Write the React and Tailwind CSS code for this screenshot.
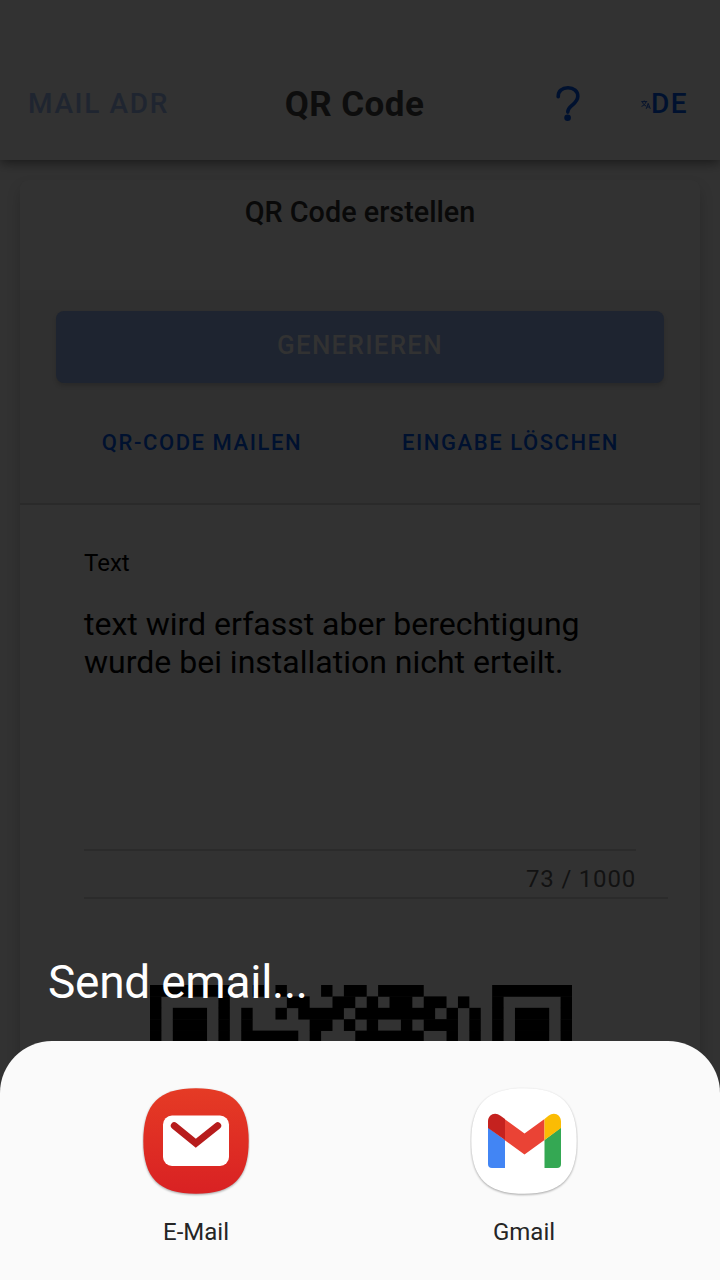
import React from "react";

const QR_ROWS = [
  "#######..#.#...#.##.####......#######",
  "#.....#.....##..##.#.##.##.#..#.....#",
  "#.###.#.#..#.####.#######.#.#.#.###.#",
  "#.###.#.#.....##.#.#..#.###.#.#.###.#",
  "#.###.#.#####.#...######..#.#.#.###.#",
];

function QrCode() {
  const cells = [];
  QR_ROWS.forEach((row, y) => {
    for (const m of row.matchAll(/#+/g)) {
      cells.push(<rect key={y + "-" + m.index} x={m.index} y={y} width={m[0].length} height="1.03" />);
    }
  });
  return (
    <svg className="h-[57px] w-[422px] shrink-0" viewBox="0 0 37 5" preserveAspectRatio="none" fill="#000">
      {cells}
    </svg>
  );
}

function QuestionIcon() {
  return (
    <svg className="h-[38px] w-[26px]" viewBox="0 0 26 38" fill="none">
      <path
        d="M3.2 11.8C3 5.8 7.2 2.8 13 2.8s9.8 3.4 9.8 8.4c0 4.2-2.6 6.4-5.6 9-3 2.5-4.4 4-4.4 6.9"
        stroke="#00112f"
        strokeWidth="3.6"
        strokeLinecap="round"
      />
      <circle cx="12.6" cy="32.8" r="3.3" fill="#00112f" />
    </svg>
  );
}

function TranslateIcon() {
  return (
    <svg className="h-[9px] w-[10px]" viewBox="0 0 10 9" fill="none" stroke="#07142e" strokeWidth="1">
      <path d="M0.3 1.6H6.2M3.2 0.5V1.6M1.4 1.8C2 4 3.5 5.4 5 6M5 1.8C4.4 4 2.8 5.5 0.5 6.4M5.2 8.9L7.2 3.4L9.3 8.9M6 7H8.6" />
    </svg>
  );
}

const SQUIRCLE = "M54 1.2C91 1.2 106.7 17 106.7 54S91 106.8 54 106.8S1.3 91 1.3 54S17 1.2 54 1.2Z";

function MailIcon() {
  return (
    <svg className="h-[112px] w-[108px]" viewBox="0 0 108 112">
      <defs>
        <linearGradient id="mailRed" x1="0" y1="0" x2="0" y2="1">
          <stop offset="0" stopColor="#e53b25" />
          <stop offset="1" stopColor="#d92123" />
        </linearGradient>
      </defs>
      <path d={SQUIRCLE} fill="url(#mailRed)" className="drop-shadow-[0_1px_1px_rgba(0,0,0,0.35)]" />
      <rect x="21" y="28.5" width="66" height="50.5" rx="9" fill="#fff" />
      <path d="M32.3 38.7L53.8 56.2L75.7 38.7" fill="none" stroke="#b71c1c" strokeWidth="7" strokeLinecap="round" />
    </svg>
  );
}

function GmailIcon() {
  return (
    <svg className="h-[112px] w-[108px]" viewBox="0 0 108 112">
      <path d={SQUIRCLE} fill="#fff" className="drop-shadow-[0_1px_1px_rgba(0,0,0,0.35)]" />
      <path d="M18 40.5L35 53V81H22Q18 81 18 77Z" fill="#4285f4" />
      <path d="M91 40.5L74.5 53V81H87Q91 81 91 77Z" fill="#34a853" />
      <path d="M34.5 32L54.5 46.5L74.5 32V53L54.5 67.5L34.5 53Z" fill="#ea4335" />
      <path d="M18 41V34.5C18 27 25.5 24.5 30.5 28.8L35 32V53Z" fill="#c5221f" />
      <path d="M91 41V34.5C91 27 83.5 24.5 78.5 28.8L74.5 32V53Z" fill="#fbbc04" />
    </svg>
  );
}

function Header() {
  return (
    <header className="relative z-10 h-40 shrink-0 bg-[#323232] pt-12 shadow-[0_2px_12px_rgba(0,0,0,0.55)]">
      <div className="grid h-28 grid-cols-[240px_1fr_240px] items-center">
        <span className="whitespace-nowrap pl-7 text-[28px] font-medium tracking-[1.65px] text-[#1f2530]">MAIL ADR</span>
        <h1 className="pr-[11px] pt-0.5 text-center text-[35px] font-bold tracking-[0.45px] text-[#0d0d0d]">QR Code</h1>
        <div className="flex items-center pl-[75px]">
          <QuestionIcon />
          <span className="ml-[60px] flex items-center text-[28px] font-medium tracking-[1.4px] text-[#00112f]">
            <TranslateIcon />
            <span>DE</span>
          </span>
        </div>
      </div>
    </header>
  );
}

function Card() {
  return (
    <section className="mx-5 mt-5 flex h-[900px] shrink-0 flex-col rounded-t-lg bg-[#323232] shadow-[0_8px_14px_rgba(0,0,0,0.18)]">
      <div className="h-[110px] shrink-0 pt-3 text-center text-[28.8px] font-medium leading-10 text-[#090909]">
        QR Code erstellen
      </div>
      <div className="h-[215px] shrink-0 border-b-2 border-[#2a2a2a] bg-[#303030] px-9 pt-[21px]">
        <div className="flex h-[72px] items-center justify-center rounded-lg bg-[#1e2430] pb-1 text-[26px] font-medium tracking-[1.25px] text-[#323232] shadow-[0_3px_4px_rgba(0,0,0,0.15)]">
          GENERIEREN
        </div>
        <div className="mt-10 grid grid-cols-2 text-center text-[22px] font-medium leading-10 tracking-[1.57px] text-[#00112f]">
          <span className="-ml-3">QR-CODE MAILEN</span>
          <span className="mr-[3px]">EINGABE LÖSCHEN</span>
        </div>
      </div>
      <div className="shrink-0 pl-16">
        <div className="pt-11 text-[24px] leading-7 text-[#000]">Text</div>
        <div className="mt-7 h-[246px] w-[552px] border-b-2 border-[#2b2b2b] text-[32px] leading-[38px] text-[#000]">
          text wird erfasst aber berechtigung
          <br />
          wurde bei installation nicht erteilt.
        </div>
        <div className="h-12 w-[584px] border-b-2 border-[#2b2b2b] pr-8 pt-3.5 text-right text-[24px] leading-7 tracking-[0.8px] text-[#121212]">
          73 / 1000
        </div>
      </div>
      <div className="flex pl-[130px] pt-[86px]">
        <QrCode />
      </div>
    </section>
  );
}

function AppChoice({ icon, label }) {
  return (
    <button className="flex w-[328px] flex-col items-center">
      {icon}
      <span className="mt-[17px] text-[24px] leading-8 text-[#252525]">{label}</span>
    </button>
  );
}

export default function App() {
  return (
    <div className="relative h-[1280px] w-[720px] overflow-hidden bg-[#323232] font-['Roboto',sans-serif]">
      <div className="flex h-full flex-col overflow-hidden">
        <Header />
        <Card />
      </div>
      <div className="absolute inset-x-0 bottom-0">
        <h2 className="mb-[27px] pl-12 text-[46px] leading-[64px] tracking-[-0.25px] text-white">Send email...</h2>
        <div className="flex h-[239px] justify-center rounded-t-[52px] bg-[#fafafa] pt-[46px]">
          <AppChoice icon={<MailIcon />} label="E-Mail" />
          <AppChoice icon={<GmailIcon />} label="Gmail" />
        </div>
      </div>
    </div>
  );
}
